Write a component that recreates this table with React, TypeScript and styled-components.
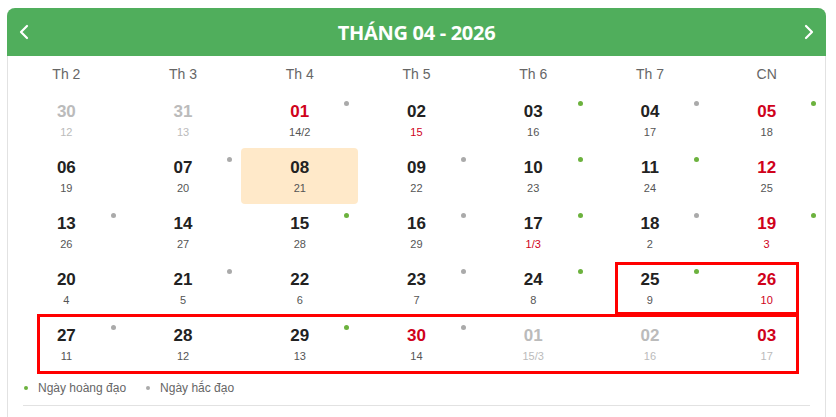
import React from "react";
import styled, { createGlobalStyle } from "styled-components";

type Dot = "good" | "bad" | null;

interface Day {
  solar: string;
  lunar: string;
  dot: Dot;
  muted?: boolean;
  redSolar?: boolean;
  redLunar?: boolean;
  today?: boolean;
}

const weekdays = ["Th 2", "Th 3", "Th 4", "Th 5", "Th 6", "Th 7", "CN"];

const days: Day[] = [
  { solar: "30", lunar: "12", dot: null, muted: true },
  { solar: "31", lunar: "13", dot: null, muted: true },
  { solar: "01", lunar: "14/2", dot: "bad", redSolar: true },
  { solar: "02", lunar: "15", dot: null, redLunar: true },
  { solar: "03", lunar: "16", dot: "good" },
  { solar: "04", lunar: "17", dot: "bad" },
  { solar: "05", lunar: "18", dot: "good", redSolar: true },

  { solar: "06", lunar: "19", dot: null },
  { solar: "07", lunar: "20", dot: "bad" },
  { solar: "08", lunar: "21", dot: null, today: true },
  { solar: "09", lunar: "22", dot: "bad" },
  { solar: "10", lunar: "23", dot: "good" },
  { solar: "11", lunar: "24", dot: "good" },
  { solar: "12", lunar: "25", dot: null, redSolar: true },

  { solar: "13", lunar: "26", dot: "bad" },
  { solar: "14", lunar: "27", dot: null },
  { solar: "15", lunar: "28", dot: "good" },
  { solar: "16", lunar: "29", dot: "bad" },
  { solar: "17", lunar: "1/3", dot: "good", redLunar: true },
  { solar: "18", lunar: "2", dot: "bad" },
  { solar: "19", lunar: "3", dot: "good", redSolar: true, redLunar: true },

  { solar: "20", lunar: "4", dot: null },
  { solar: "21", lunar: "5", dot: "bad" },
  { solar: "22", lunar: "6", dot: null },
  { solar: "23", lunar: "7", dot: "bad" },
  { solar: "24", lunar: "8", dot: "good" },
  { solar: "25", lunar: "9", dot: "good" },
  { solar: "26", lunar: "10", dot: null, redSolar: true, redLunar: true },

  { solar: "27", lunar: "11", dot: "bad" },
  { solar: "28", lunar: "12", dot: null },
  { solar: "29", lunar: "13", dot: "good" },
  { solar: "30", lunar: "14", dot: "bad", redSolar: true },
  { solar: "01", lunar: "15/3", dot: null, muted: true },
  { solar: "02", lunar: "16", dot: null, muted: true },
  { solar: "03", lunar: "17", dot: null, muted: true, redSolar: true },
];

const Chevron = ({ dir }: { dir: "left" | "right" }) => (
  <svg width="12" height="16" viewBox="0 0 12 16">
    <polyline
      points={dir === "left" ? "9,2 3,8 9,14" : "3,2 9,8 3,14"}
      fill="none"
      stroke="#fff"
      strokeWidth="2.2"
      strokeLinecap="round"
      strokeLinejoin="round"
    />
  </svg>
);

export default function App() {
  return (
    <>
      <GlobalStyle />
      <Page>
        <Card>
          <Header>
            <NavButton>
              <Chevron dir="left" />
            </NavButton>
            <Title>THÁNG 04 - 2026</Title>
            <NavButton>
              <Chevron dir="right" />
            </NavButton>
          </Header>
          <WeekRow>
            {weekdays.map((w) => (
              <WeekDay key={w}>{w}</WeekDay>
            ))}
          </WeekRow>
          <Grid>
            {days.map((d, i) => (
              <Cell key={i} $today={d.today}>
                <Solar $muted={d.muted} $red={d.redSolar}>
                  {d.solar}
                </Solar>
                <Lunar $muted={d.muted} $red={d.redLunar}>
                  {d.lunar}
                </Lunar>
                {d.dot ? <CellDot $kind={d.dot} /> : null}
              </Cell>
            ))}
            {/* annotation boxes drawn over the weekend and the last week */}
            <Mark style={{ left: 607, top: 170, width: 184, height: 53 }} />
            <Mark style={{ left: 29, top: 222, width: 762, height: 60 }} />
          </Grid>
          <Legend>
            <LegendItem>
              <LegendDot $kind="good" />
              Ngày hoàng đạo
            </LegendItem>
            <LegendItem>
              <LegendDot $kind="bad" />
              Ngày hắc đạo
            </LegendItem>
          </Legend>
          <Rule />
        </Card>
      </Page>
    </>
  );
}

const GlobalStyle = createGlobalStyle`
  html, body {
    margin: 0;
    padding: 0;
    background: #fff;
    font-family: "Liberation Sans", Arial, sans-serif;
  }
`;

const Page = styled.div`
  padding: 8px 10px 0 7px;
`;

const Card = styled.div`
  width: 817px;
  border-left: 1px solid #e2e2e2;
  border-right: 1px solid #e2e2e2;
  border-radius: 8px 8px 0 0;
  padding-bottom: 30px;
`;

const Header = styled.div`
  height: 48px;
  margin: 0 -1px;
  background: #50ae5c;
  border-radius: 8px 8px 0 0;
  display: flex;
  align-items: center;
  justify-content: space-between;
  padding: 0 9px;
`;

const NavButton = styled.div`
  width: 16px;
  height: 16px;
  display: flex;
  align-items: center;
  justify-content: center;
`;

const Title = styled.div`
  color: #fff;
  font-family: "Open Sans", sans-serif;
  font-weight: 700;
  font-size: 20px;
  letter-spacing: -0.3px;
`;

const WeekRow = styled.div`
  display: grid;
  grid-template-columns: repeat(7, 1fr);
  height: 36px;
  align-items: center;
`;

const WeekDay = styled.div`
  text-align: center;
  color: #666;
  font-size: 14px;
`;

const Grid = styled.div`
  position: relative;
  display: grid;
  grid-template-columns: repeat(7, 1fr);
  grid-auto-rows: 56px;
`;

const Cell = styled.div<{ $today?: boolean }>`
  position: relative;
  display: flex;
  flex-direction: column;
  align-items: center;
  padding-top: 10px;
  border-radius: 4px;
  background: ${(p) => (p.$today ? "#ffe9c9" : "transparent")};
`;

const Solar = styled.div<{ $muted?: boolean; $red?: boolean }>`
  font-size: 17px;
  font-weight: 700;
  line-height: 20px;
  color: ${(p) =>
    p.$muted && !p.$red ? "#bbb" : p.$red ? "#d0021b" : "#222"};
`;

const Lunar = styled.div<{ $muted?: boolean; $red?: boolean }>`
  font-size: 11px;
  line-height: 14px;
  margin-top: 3px;
  color: ${(p) => (p.$muted ? "#bbb" : p.$red ? "#d0021b" : "#555")};
`;

const dotColor = (k: Dot) => (k === "good" ? "#6cb23e" : "#aaa");

const CellDot = styled.span<{ $kind: Dot }>`
  position: absolute;
  top: 9px;
  right: 9px;
  width: 5px;
  height: 5px;
  border-radius: 50%;
  background: ${(p) => dotColor(p.$kind)};
`;

const Mark = styled.div`
  position: absolute;
  box-sizing: border-box;
  border: 3px solid #ff0000;
  pointer-events: none;
`;

const Legend = styled.div`
  display: flex;
  gap: 20px;
  padding: 8px 15px 0 16px;
  height: 16px;
  align-items: center;
`;

const LegendItem = styled.div`
  display: flex;
  align-items: center;
  gap: 10px;
  font-size: 12px;
  color: #666;
`;

const LegendDot = styled.span<{ $kind: Dot }>`
  width: 4px;
  height: 4px;
  border-radius: 50%;
  background: ${(p) => dotColor(p.$kind)};
`;

const Rule = styled.div`
  margin: 9px 15px 0;
  height: 1px;
  background: #e2e2e2;
`;
